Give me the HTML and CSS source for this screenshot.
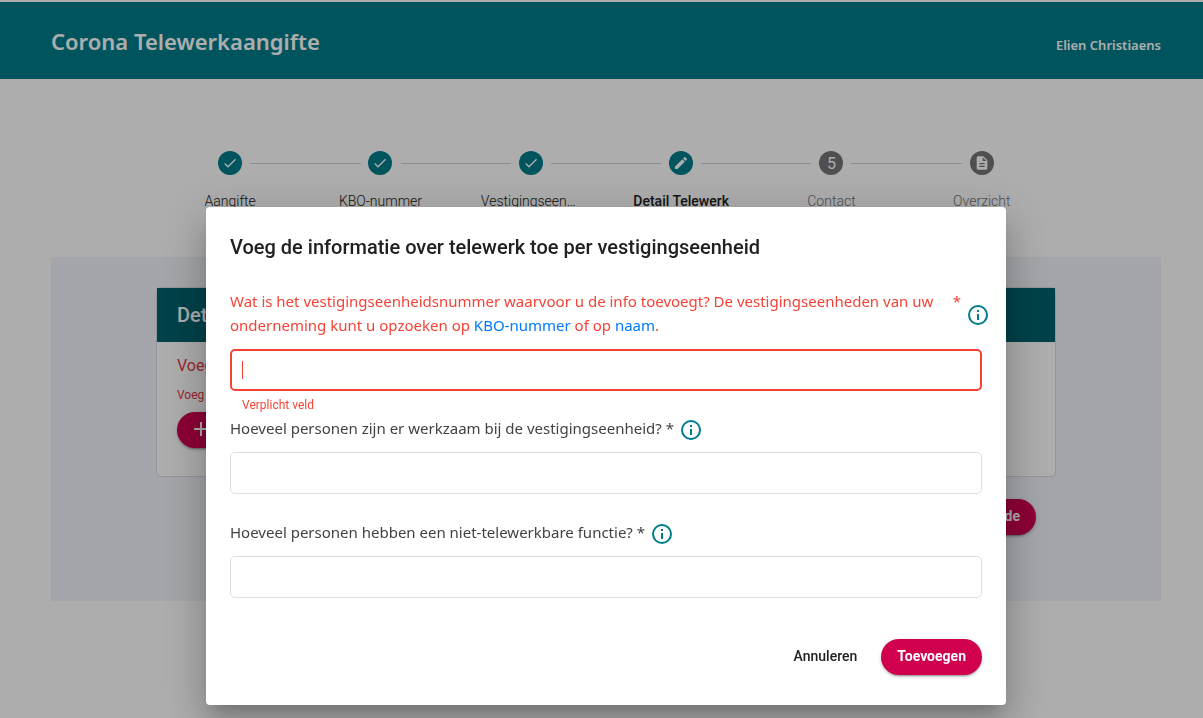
FILE: index.html
```html
<!DOCTYPE html>
<html lang="nl">
<head>
<meta charset="utf-8">
<title>Corona Telewerkaangifte</title>
<link rel="stylesheet" href="styles.css">
</head>
<body>
<svg class="sprite" aria-hidden="true">
  <symbol id="check" viewBox="0 0 24 24"><path d="M9 16.17 4.83 12l-1.42 1.41L9 19 21 7l-1.41-1.41z"/></symbol>
  <symbol id="pen" viewBox="0 0 24 24"><path d="M3 17.25V21h3.75L17.81 9.94l-3.75-3.75L3 17.25zM20.71 7.04a1 1 0 0 0 0-1.41l-2.34-2.34a1 1 0 0 0-1.41 0l-1.83 1.83 3.75 3.75 1.83-1.83z"/></symbol>
  <symbol id="doc" viewBox="0 0 24 24"><path d="M14 2H6a2 2 0 0 0-2 2v16c0 1.1.9 2 2 2h12a2 2 0 0 0 2-2V8l-6-6zm2 16H8v-2h8v2zm0-4H8v-2h8v2zm-3-5V3.500L18.500 9H13z"/></symbol>
  <symbol id="info" viewBox="0 0 24 24"><path d="M11 7h2v2h-2zm0 4h2v6h-2zm1-9a10 10 0 1 0 0 20 10 10 0 0 0 0-20zm0 18a8 8 0 1 1 0-16 8 8 0 0 1 0 16z"/></symbol>
  <symbol id="plus" viewBox="0 0 24 24"><path d="M19 13h-6v6h-2v-6H5v-2h6V5h2v6h6v2z"/></symbol>
</svg>

<header class="topbar">
  <h1 class="topbar-title">Corona Telewerkaangifte</h1>
  <span class="topbar-user">Elien Christiaens</span>
</header>

<main class="page">
  <ol class="stepper">
    <li class="step done"><span class="dot"><svg><use href="#check"/></svg></span><span class="step-label">Aangifte</span></li>
    <li class="step done"><span class="dot"><svg><use href="#check"/></svg></span><span class="step-label">KBO-nummer</span></li>
    <li class="step done"><span class="dot"><svg><use href="#check"/></svg></span><span class="step-label">Vestigingseenheden</span></li>
    <li class="step done current"><span class="dot"><svg><use href="#pen"/></svg></span><span class="step-label">Detail Telewerk</span></li>
    <li class="step"><span class="dot">5</span><span class="step-label">Contact</span></li>
    <li class="step"><span class="dot"><svg><use href="#doc"/></svg></span><span class="step-label">Overzicht</span></li>
  </ol>

  <section class="panel">
    <div class="card">
      <h2 class="card-title">Detail Telewerk</h2>
      <div class="card-body">
        <p class="card-text">Voeg de informatie toe</p>
        <p class="card-error">Voeg informatie toe</p>
        <button class="btn btn-primary btn-add" type="button"><svg><use href="#plus"/></svg>Toevoegen</button>
      </div>
    </div>
    <div class="panel-actions"><button class="btn btn-primary" type="button">Volgende</button></div>
  </section>
</main>

<div class="overlay">
  <form class="dialog" role="dialog" aria-modal="true" aria-labelledby="dialog-title">
    <h2 class="dialog-title" id="dialog-title">Voeg de informatie over telewerk toe per vestigingseenheid</h2>

    <div class="field invalid">
      <div class="label-row">
        <label class="label" for="number">Wat is het vestigingseenheidsnummer waarvoor u de info toevoegt? De vestigingseenheden van uw onderneming kunt u opzoeken op <a href="#kbo">KBO-nummer</a> of op <a href="#naam">naam</a>.</label>
        <span class="required">*</span>
        <button class="info" type="button" aria-label="Info"><svg><use href="#info"/></svg></button>
      </div>
      <div class="control">
        <input class="input" id="number" type="text" autofocus aria-describedby="number-error">
        <span class="caret"></span>
      </div>
      <div class="hint" id="number-error">Verplicht veld</div>
    </div>

    <div class="field">
      <div class="label-row">
        <label class="label" for="staff">Hoeveel personen zijn er werkzaam bij de vestigingseenheid? *</label>
        <button class="info" type="button" aria-label="Info"><svg><use href="#info"/></svg></button>
      </div>
      <input class="input" id="staff" type="text">
      <div class="hint"></div>
    </div>

    <div class="field">
      <div class="label-row">
        <label class="label" for="onsite">Hoeveel personen hebben een niet-telewerkbare functie? *</label>
        <button class="info" type="button" aria-label="Info"><svg><use href="#info"/></svg></button>
      </div>
      <input class="input" id="onsite" type="text">
      <div class="hint"></div>
    </div>

    <div class="dialog-actions">
      <button class="btn" type="button">Annuleren</button>
      <button class="btn btn-primary" type="submit">Toevoegen</button>
    </div>
  </form>
</div>
</body>
</html>
```
FILE: styles.css
```css
* { box-sizing: border-box; }

body {
  margin: 0;
  padding-top: 2px;
  background: #fff;
  color: #212121;
  font-family: Roboto, sans-serif;
  font-size: 14px;
}

h1, h2, p, ol { margin: 0; padding: 0; }
svg { fill: currentColor; }
.sprite { display: none; }

.topbar {
  display: flex;
  align-items: center;
  justify-content: space-between;
  height: 77px;
  padding: 0 42px 0 51px;
  background: #007d8a;
  color: #fff;
  font-family: "Noto Sans", sans-serif;
  font-weight: 600;
}
.topbar-title { font-size: 22px; font-weight: 600; line-height: 32px; }
.topbar-user { padding-top: 8px; font-size: 13px; }

.page { padding: 72px 42px 0 51px; }

.stepper {
  display: flex;
  max-width: 902px;
  margin: 0 auto;
  list-style: none;
}
.step {
  position: relative;
  flex: 1 1 0;
  min-width: 0;
  display: flex;
  flex-direction: column;
  align-items: center;
  gap: 16px;
  color: #757575;
  font-weight: 300;
}
.step + .step::before {
  content: "";
  position: absolute;
  top: 12px;
  left: calc(-50% + 20px);
  right: calc(50% + 20px);
  border-top: 1px solid #d2d2d2;
}
.dot {
  display: flex;
  align-items: center;
  justify-content: center;
  width: 24px;
  height: 24px;
  border-radius: 50%;
  background: #757575;
  color: #fff;
  font-size: 16px;
  font-weight: 400;
}
.dot svg { width: 16px; height: 16px; }
.step-label {
  max-width: 100px;
  overflow: hidden;
  text-overflow: ellipsis;
  white-space: nowrap;
  line-height: 20px;
}
.done { color: #212121; }
.done .dot { background: #007d8a; }
.current { font-weight: 500; }

.panel {
  margin-top: 46px;
  padding: 30px 105px 66px;
  background: #f1f4fb;
}
.card {
  border: 1px solid #dcdcdc;
  border-radius: 4px;
  background: #fff;
}
.card-title {
  padding: 0 20px;
  background: #00616d;
  color: #fff;
  font-size: 20px;
  font-weight: 500;
  line-height: 54px;
}
.card-body { padding: 12px 20px 28px; }
.card-text { color: #e53945; font-size: 16px; line-height: 24px; }
.card-error { padding: 8px 0; color: #e53945; font-size: 12px; line-height: 18px; }
.panel-actions { display: flex; justify-content: flex-end; padding: 22px 20px 0; }

.btn {
  display: inline-flex;
  align-items: center;
  height: 36px;
  padding: 0 16px 2px;
  border: 0;
  border-radius: 18px;
  background: none;
  color: #212121;
  font: 500 14px/34px Roboto, sans-serif;
}
.btn-primary {
  background: #d0004f;
  color: #fff;
  font-weight: 700;
  box-shadow: 0 3px 1px -2px rgba(0, 0, 0, .2), 0 2px 2px rgba(0, 0, 0, .14), 0 1px 5px rgba(0, 0, 0, .12);
}
.btn-add { padding-left: 12px; }
.btn-add svg { width: 24px; height: 24px; }

.overlay {
  position: fixed;
  inset: 0;
  display: flex;
  align-items: flex-start;
  justify-content: center;
  padding: 207px 0 0 9px;
  background: rgba(0, 0, 0, .32);
}
.dialog {
  width: 100%;
  max-width: 800px;
  padding: 24px 24px 30px;
  border-radius: 4px;
  background: #fff;
  box-shadow: 0 11px 15px -7px rgba(0, 0, 0, .2), 0 24px 38px 3px rgba(0, 0, 0, .14), 0 9px 46px 8px rgba(0, 0, 0, .12);
}
.dialog-title {
  margin-bottom: 28px;
  font-size: 20px;
  font-weight: 500;
  line-height: 32px;
}

.label-row {
  display: flex;
  align-items: center;
  margin-bottom: 10px;
  color: #424242;
  font: 15px/24px "Noto Sans", sans-serif;
}
.label { margin: -2px 0 2px; }
.label a { color: #007bff; text-decoration: none; }
.info {
  flex: none;
  display: flex;
  margin: 0 0 0 5px;
  padding: 0;
  border: 0;
  background: none;
  color: #007d8a;
}
.info svg { width: 24px; height: 24px; }
.input {
  display: block;
  width: 100%;
  height: 42px;
  padding: 0 11px;
  border: 1px solid #e0e0e0;
  border-radius: 5px;
  outline: 0;
  background: #fff;
  font: 16px Roboto, sans-serif;
}
.hint { height: 28px; padding: 5px 12px; font-size: 12px; line-height: 18px; }

.invalid .label-row { color: #f44336; margin-right: -8px; }
.invalid .label { flex: 1; }
.required { align-self: flex-start; margin: -2px 0 0 16px; }
.control { position: relative; }
.caret {
  position: absolute;
  top: 12px;
  left: 12px;
  width: 1px;
  height: 18px;
  background: #f44336;
}
.invalid .input { padding: 0 10px; border: 2px solid #f44336; caret-color: transparent; }
.invalid .hint { height: 27px; color: #f44336; }

.dialog-actions {
  display: flex;
  justify-content: flex-end;
  gap: 8px;
  padding-top: 13px;
}
```
